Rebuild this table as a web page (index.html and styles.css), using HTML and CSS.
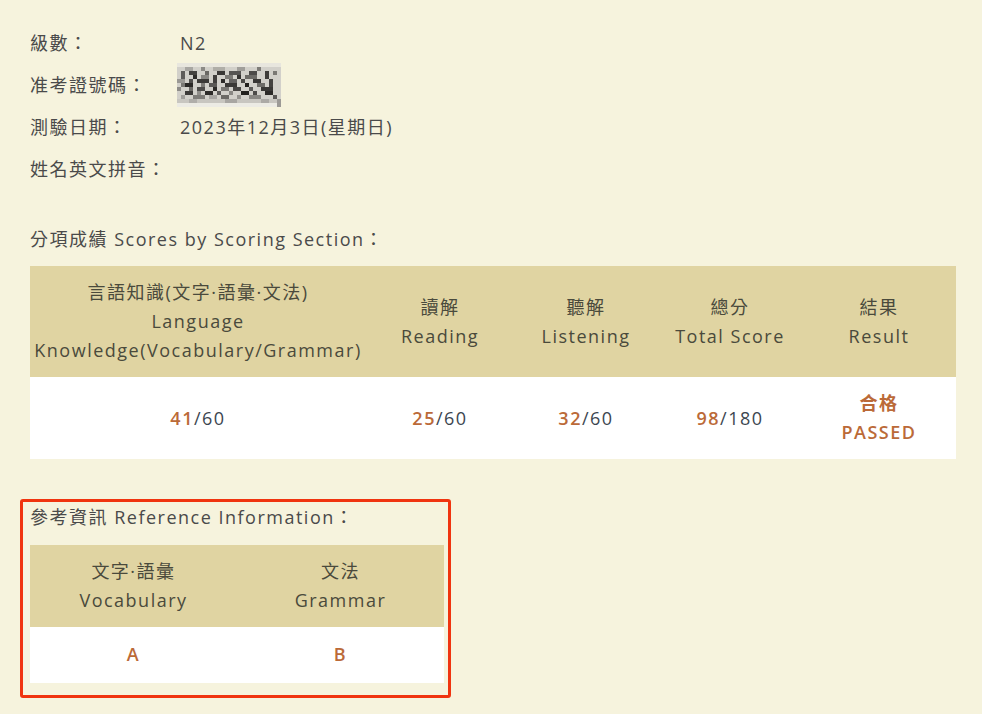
FILE: index.html
```html
<!DOCTYPE html>
<html lang="zh-Hant">
<head>
  <meta charset="UTF-8">
  <title>JLPT 成績</title>
  <link rel="stylesheet" href="styles.css">
</head>
<body>
  <main class="page">
    <!-- 基本資料 -->
    <dl class="info">
      <dt>級數：</dt>
      <dd>N2</dd>
      <dt>准考證號碼：</dt>
      <dd>
        <svg class="mosaic" width="104" height="44" viewBox="0 0 26 11" shape-rendering="crispEdges">
          <rect x="0" y="0" width="26" height="11" fill="#d2d0ca"/>
          <rect x="0" y="0" width="26" height="1" fill="#e8e6de"/>
          <rect x="2" y="1" width="2" height="1" fill="#a8a6a2"/>
          <rect x="6" y="1" width="1" height="1" fill="#8c8a86"/>
          <rect x="9" y="1" width="3" height="1" fill="#b0aea8"/>
          <rect x="15" y="1" width="2" height="1" fill="#a09e9a"/>
          <rect x="20" y="1" width="1" height="1" fill="#7e7c78"/>
          <rect x="1" y="2" width="1" height="2" fill="#5e5c5a"/>
          <rect x="3" y="2" width="2" height="1" fill="#454340"/>
          <rect x="7" y="2" width="1" height="1" fill="#6a6864"/>
          <rect x="10" y="2" width="2" height="1" fill="#3a3836"/>
          <rect x="13" y="2" width="3" height="1" fill="#565452"/>
          <rect x="18" y="2" width="2" height="1" fill="#4c4a48"/>
          <rect x="22" y="2" width="1" height="2" fill="#3e3c3a"/>
          <rect x="24" y="2" width="1" height="1" fill="#7a7874"/>
          <rect x="4" y="3" width="1" height="1" fill="#2e2c2a"/>
          <rect x="6" y="3" width="2" height="1" fill="#8a8884"/>
          <rect x="9" y="3" width="1" height="2" fill="#403e3c"/>
          <rect x="12" y="3" width="2" height="1" fill="#7c7a76"/>
          <rect x="15" y="3" width="1" height="1" fill="#343230"/>
          <rect x="17" y="3" width="3" height="1" fill="#6c6a66"/>
          <rect x="0" y="4" width="2" height="1" fill="#9a9894"/>
          <rect x="3" y="4" width="1" height="1" fill="#504e4c"/>
          <rect x="5" y="4" width="3" height="1" fill="#3c3a38"/>
          <rect x="11" y="4" width="1" height="1" fill="#2c2a28"/>
          <rect x="13" y="4" width="2" height="1" fill="#646260"/>
          <rect x="16" y="4" width="1" height="1" fill="#4a4846"/>
          <rect x="19" y="4" width="2" height="1" fill="#383634"/>
          <rect x="23" y="4" width="1" height="2" fill="#454341"/>
          <rect x="1" y="5" width="1" height="1" fill="#7a7874"/>
          <rect x="2" y="5" width="2" height="1" fill="#2a2826"/>
          <rect x="6" y="5" width="1" height="1" fill="#7e7c78"/>
          <rect x="8" y="5" width="2" height="1" fill="#5a5856"/>
          <rect x="12" y="5" width="3" height="1" fill="#3a3836"/>
          <rect x="17" y="5" width="1" height="1" fill="#22201e"/>
          <rect x="20" y="5" width="2" height="1" fill="#6e6c68"/>
          <rect x="0" y="6" width="1" height="1" fill="#8e8c88"/>
          <rect x="3" y="6" width="1" height="1" fill="#6a6864"/>
          <rect x="5" y="6" width="2" height="1" fill="#4e4c4a"/>
          <rect x="9" y="6" width="1" height="1" fill="#2a2826"/>
          <rect x="11" y="6" width="2" height="1" fill="#7a7874"/>
          <rect x="14" y="6" width="2" height="1" fill="#484644"/>
          <rect x="18" y="6" width="1" height="1" fill="#5a5856"/>
          <rect x="21" y="6" width="3" height="1" fill="#3a3836"/>
          <rect x="2" y="7" width="2" height="1" fill="#3c3a38"/>
          <rect x="5" y="7" width="1" height="1" fill="#908e8a"/>
          <rect x="7" y="7" width="2" height="1" fill="#2e2c2a"/>
          <rect x="10" y="7" width="1" height="1" fill="#5e5c5a"/>
          <rect x="13" y="7" width="1" height="1" fill="#8a8884"/>
          <rect x="16" y="7" width="2" height="1" fill="#22201e"/>
          <rect x="19" y="7" width="1" height="1" fill="#4e4c4a"/>
          <rect x="22" y="7" width="2" height="1" fill="#2c2a28"/>
          <rect x="1" y="8" width="1" height="1" fill="#a09e9a"/>
          <rect x="4" y="8" width="3" height="1" fill="#7e7c78"/>
          <rect x="8" y="8" width="2" height="1" fill="#a8a6a2"/>
          <rect x="11" y="8" width="2" height="1" fill="#6c6a66"/>
          <rect x="15" y="8" width="1" height="1" fill="#94928e"/>
          <rect x="18" y="8" width="3" height="1" fill="#8a8884"/>
          <rect x="24" y="8" width="1" height="1" fill="#5a5856"/>
          <rect x="0" y="9" width="26" height="1" fill="#c8c6c0"/>
          <rect x="3" y="9" width="2" height="1" fill="#b0aeaa"/>
          <rect x="12" y="9" width="3" height="1" fill="#a8a6a2"/>
          <rect x="21" y="9" width="2" height="1" fill="#acaaa6"/>
          <rect x="0" y="10" width="26" height="1" fill="#ecebe4"/>
          <rect x="25" y="9" width="1" height="2" fill="#9c9a96"/>
        </svg>
      </dd>
      <dt>測驗日期：</dt>
      <dd>2023年12月3日(星期日)</dd>
      <dt>姓名英文拼音：</dt>
      <dd></dd>
    </dl>

    <!-- 分項成績 -->
    <h2 class="section-title">分項成績 Scores by Scoring Section：</h2>
    <table class="score-table">
      <thead>
        <tr>
          <th class="col-lk">言語知識(文字·語彙·文法)<br>Language<br>Knowledge(Vocabulary/Grammar)</th>
          <th class="col-rd">讀解<br>Reading</th>
          <th class="col-ls">聽解<br>Listening</th>
          <th class="col-tt">總分<br>Total Score</th>
          <th class="col-rs">結果<br>Result</th>
        </tr>
      </thead>
      <tbody>
        <tr>
          <td><span class="got">41</span>/60</td>
          <td><span class="got">25</span>/60</td>
          <td><span class="got">32</span>/60</td>
          <td><span class="got">98</span>/180</td>
          <td class="result">合格<br>PASSED</td>
        </tr>
      </tbody>
    </table>

    <!-- 參考資訊（紅框標示） -->
    <section class="ref-box">
      <h2 class="section-title ref-title">參考資訊 Reference Information：</h2>
      <table class="score-table ref-table">
        <thead>
          <tr>
            <th>文字·語彙<br>Vocabulary</th>
            <th>文法<br>Grammar</th>
          </tr>
        </thead>
        <tbody>
          <tr>
            <td class="grade">A</td>
            <td class="grade">B</td>
          </tr>
        </tbody>
      </table>
    </section>
  </main>
</body>
</html>
```

FILE: styles.css
```css
/* 基本設定 */
html, body {
  margin: 0;
  padding: 0;
  background-color: #f6f3dd;
}
body {
  font-family: "Open Sans", "Noto Sans CJK TC", sans-serif;
  font-size: 18px;
  color: #4a4a4a;
  letter-spacing: 1.5px;
}
.page {
  padding: 22px 26px 20px 30px;
  width: 926px;
}

/* 基本資料 */
.info {
  display: grid;
  grid-template-columns: 150px auto;
  grid-auto-rows: 42px;
  align-items: center;
  margin: 0;
}
.info dt,
.info dd {
  margin: 0;
  line-height: 28px;
}
.mosaic {
  display: block;
  margin-left: -3px;
}

/* 標題 */
.section-title {
  margin: 35px 0 13px;
  font-size: 18px;
  font-weight: normal;
  line-height: 28px;
  color: #4a4a4a;
}

/* 成績表 */
.score-table {
  border-collapse: collapse;
  width: 926px;
  table-layout: fixed;
}
.score-table th {
  background-color: #e0d4a2;
  color: #4a4a3c;
  font-weight: normal;
  line-height: 29px;
  padding: 12px 0;
  text-align: center;
  vertical-align: middle;
}
.score-table td {
  background-color: #fff;
  line-height: 29px;
  padding: 12px 0;
  text-align: center;
  vertical-align: middle;
  color: #3c4650;
}
.col-lk { width: 336px; }
.col-rd { width: 148px; }
.col-ls { width: 144px; }
.col-tt { width: 144px; }
.col-rs { width: 154px; }
.got {
  color: #bb6a38;
  font-weight: 600;
}
.score-table .result {
  color: #bb6a38;
  font-weight: 600;
}

/* 參考資訊 */
.ref-box {
  margin: 40px 0 0 -10px;
  width: 418px;
  border: 3px solid #f0340f;
  border-radius: 3px;
  padding: 0 0 12px 7px;
}
.ref-title {
  margin: 1px 0 14px;
}
.ref-table {
  width: 414px;
}
.score-table .grade {
  color: #bb6a38;
  font-weight: 600;
  padding: 13px 0 14px;
}
```
